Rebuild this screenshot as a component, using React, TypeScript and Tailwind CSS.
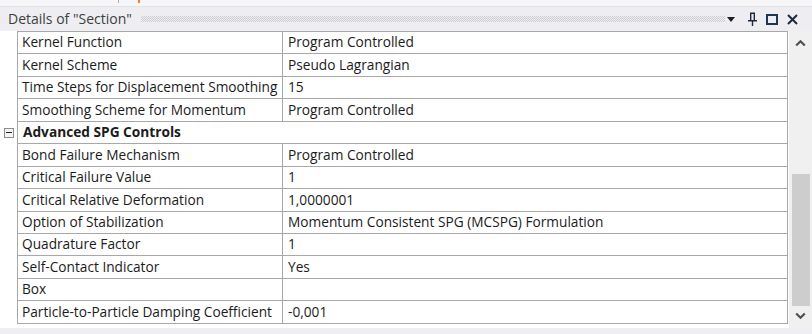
const rows: { k: string; v?: string; group?: boolean }[] = [
  { k: 'Kernel Function', v: 'Program Controlled' },
  { k: 'Kernel Scheme', v: 'Pseudo Lagrangian' },
  { k: 'Time Steps for Displacement Smoothing', v: '15' },
  { k: 'Smoothing Scheme for Momentum', v: 'Program Controlled' },
  { k: 'Advanced SPG Controls', group: true },
  { k: 'Bond Failure Mechanism', v: 'Program Controlled' },
  { k: 'Critical Failure Value', v: '1' },
  { k: 'Critical Relative Deformation', v: '1,0000001' },
  { k: 'Option of Stabilization', v: 'Momentum Consistent SPG (MCSPG) Formulation' },
  { k: 'Quadrature Factor', v: '1' },
  { k: 'Self-Contact Indicator', v: 'Yes' },
  { k: 'Box', v: '' },
  { k: 'Particle-to-Particle Damping Coefficient', v: '-0,001' },
];

function Chevron({ down }: { down?: boolean }) {
  return (
    <svg width="11" height="8" viewBox="0 0 11 8" className={down ? 'rotate-180' : ''}>
      <path d="M1.2 6.5 L5.5 2.2 L9.8 6.5" fill="none" stroke="#505050" strokeWidth="2.2" />
    </svg>
  );
}

export default function App() {
  return (
    <div className="w-[812px] h-[334px] bg-white flex flex-col overflow-hidden font-['Open_Sans','Noto_Sans',sans-serif] text-[13.7px] text-[#1b1b1b]">
      <div className="h-[6px] bg-[#f6f6f8] flex items-start">
        <div className="ml-[118px] w-px h-[3px] bg-[#b0b0b0]" />
        <div className="ml-[19px] w-[2px] h-[3px] bg-[#f08030]" />
      </div>
      <div className="h-[25px] bg-[#eeeef2] border-t border-[#e2e2e6] flex items-center">
        <span className="pl-[8px] text-[14px] text-[#3e3e3e] whitespace-nowrap leading-none">Details of "Section"</span>
        <div className="flex-1 ml-[9px] mr-[2px] h-[6px] bg-[conic-gradient(#cdcdd2_25%,transparent_0_50%,#cdcdd2_0_75%,transparent_0)] bg-[length:2px_2px]" />
        <div className="flex items-center pr-[14px]">
          <svg width="8" height="5" viewBox="0 0 8 5">
            <path d="M0 0 H8 L4 5 Z" fill="#1e1e1e" />
          </svg>
          <svg width="11" height="14" viewBox="0 0 11 14" className="ml-[12px]">
            <path d="M3 0.5 H8 V8 H10 V9.5 H6.2 V14 H4.8 V9.5 H1 V8 H3 Z M4.4 2 V8 H6.6 V2 Z" fill="#1e2a3a" fillRule="evenodd" />
          </svg>
          <svg width="12" height="11" viewBox="0 0 12 11" className="ml-[8px]">
            <rect x="1" y="1" width="10" height="9" fill="none" stroke="#1e3450" strokeWidth="2" />
          </svg>
          <svg width="11" height="11" viewBox="0 0 11 11" className="ml-[9px]">
            <path d="M1 1 L10 10 M10 1 L1 10" stroke="#1e2a3a" strokeWidth="2" />
          </svg>
        </div>
      </div>
      <div className="flex flex-1 min-h-0">
        <div className="flex flex-col">
          <div className="flex">
            <div className="w-[17px]" />
            <div className="w-[771px] border-t border-[#a8a8a8]" />
          </div>
          {rows.map((r) => (
            <div key={r.k} className="flex h-[22.45px]">
              <div className="w-[17px] flex items-center justify-center">
                {r.group && (
                  <div className="w-[10px] h-[10px] border border-[#8c8c8c] bg-[#f4f4f4] flex items-center justify-center">
                    <div className="w-[6px] h-px bg-[#222]" />
                  </div>
                )}
              </div>
              {r.group ? (
                <div className="w-[771px] border-l border-r border-b border-[#a8a8a8] flex items-center pl-[5px] font-bold whitespace-nowrap">
                  {r.k}
                </div>
              ) : (
                <div className="w-[771px] flex border-l border-r border-b border-[#a8a8a8]">
                  <div className="w-[265px] border-r border-[#a8a8a8] flex items-center pl-[4px] whitespace-nowrap">{r.k}</div>
                  <div className="flex-1 flex items-center pl-[5px] whitespace-nowrap">{r.v}</div>
                </div>
              )}
            </div>
          ))}
        </div>
        <div className="w-[24px] bg-[#f0f0f0] flex flex-col items-center ml-px h-[297px]">
          <div className="h-[22px] flex items-center pt-[2px]">
            <Chevron />
          </div>
          <div className="flex-1" />
          <div className="w-[18px] h-[132px] bg-[#cdcdcd]" />
          <div className="h-[22px] flex items-center pb-[2px]">
            <Chevron down />
          </div>
        </div>
      </div>
      <div className="h-[6px] bg-[#efeff2]" />
    </div>
  );
}
